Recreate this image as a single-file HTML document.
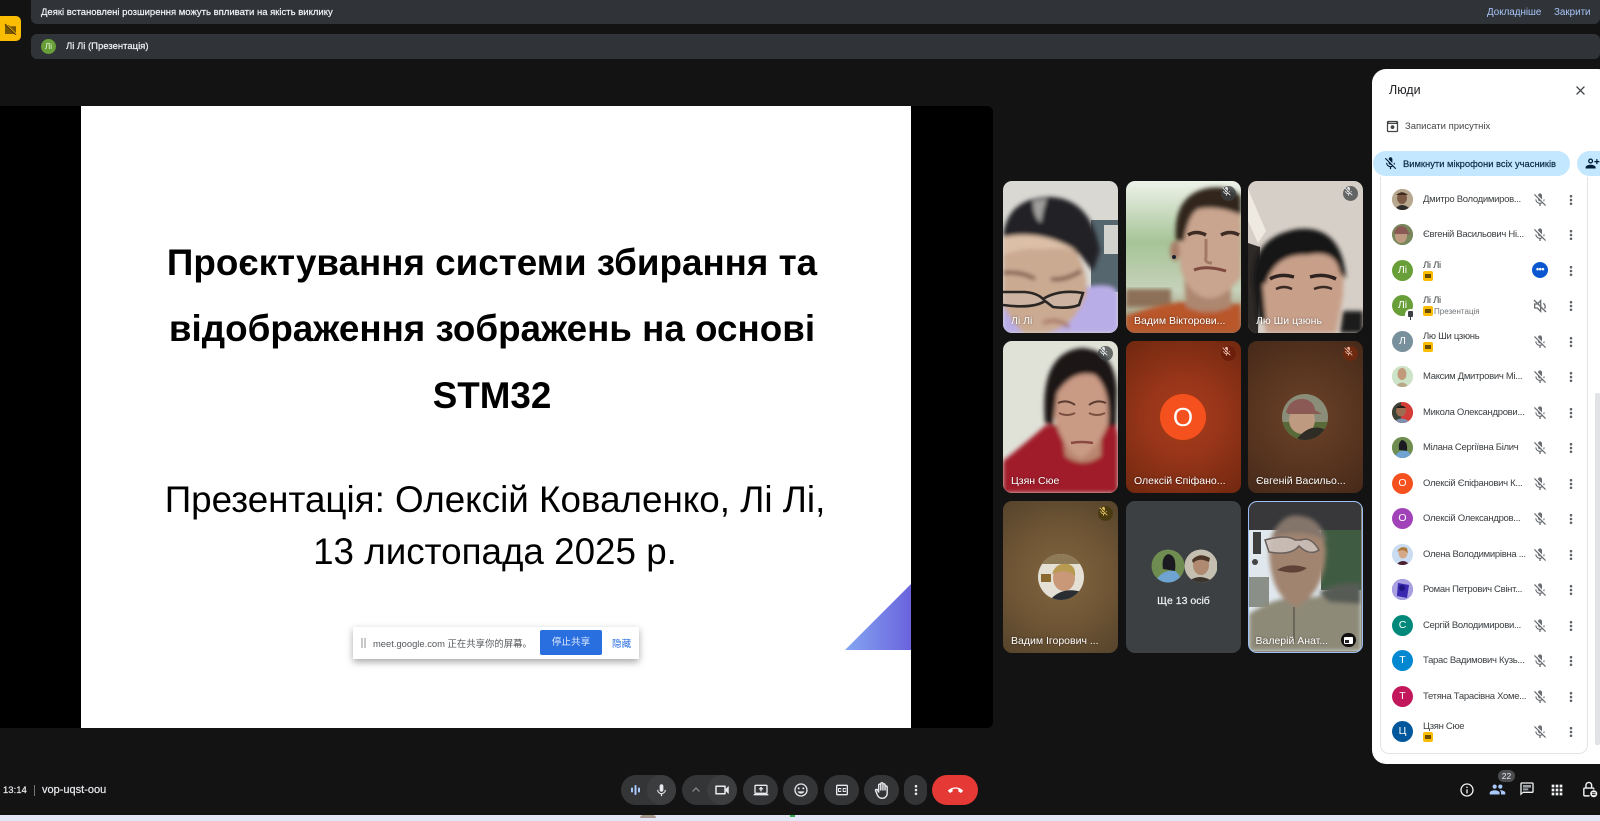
<!DOCTYPE html>
<html lang="uk">
<head>
<meta charset="utf-8">
<title>Google Meet</title>
<style>
*{box-sizing:border-box}
html,body{margin:0;padding:0;width:1600px;height:821px;overflow:hidden;background:#131314;font-family:"Liberation Sans","Noto Sans CJK SC",sans-serif}
body{filter:blur(.3px)}
.a{position:absolute}
.t{position:absolute;white-space:nowrap;line-height:1}
.md{-webkit-text-stroke:.2px currentColor}
.tile{position:absolute;width:115px;height:152px;border-radius:9px;overflow:hidden}
.tile svg{position:absolute;left:0;top:0}
.name{position:absolute;left:8px;bottom:6px;color:#fff;font-size:10.5px;white-space:nowrap;line-height:12px;text-shadow:0 0 2px rgba(0,0,0,.5)}
.chip{position:absolute;width:15px;height:15px;border-radius:50%;display:flex;align-items:center;justify-content:center}
.btn{position:absolute;top:775px;height:30px;border-radius:15px;background:#333537;display:flex;align-items:center;justify-content:center}
.row{position:absolute;left:0;width:228px;height:35px}
.av{position:absolute;left:20px;top:7px;width:21px;height:21px;border-radius:50%;color:#fff;font-size:10.5px;line-height:21px;text-align:center;overflow:hidden}
.n{position:absolute;left:51px;top:12px;font-size:9.5px;letter-spacing:-.3px;color:#3c4043;white-space:nowrap;line-height:11px}
.n2{top:7px}
.sub{position:absolute;left:51px;top:18px;width:10px;height:10px;border-radius:2px;background:#fbbc04}
.sub:after{content:"";position:absolute;left:2px;top:3px;width:6px;height:4px;background:#6b4e00}
.m{position:absolute;left:160px;top:9.5px}
.d{position:absolute;left:192px;top:10.5px}
</style>
</head>
<body>
<svg width="0" height="0" style="position:absolute">
<defs>
<symbol id="micoff" viewBox="0 0 24 24"><path d="M19 11h-1.7c0 .74-.16 1.43-.43 2.05l1.23 1.23c.56-.98.9-2.09.9-3.28zm-4.02.17c0-.06.02-.11.02-.17V5c0-1.66-1.34-3-3-3s-3 1.34-3 3v.18l5.98 5.99zM4.27 3L3 4.27l6.01 6.01V11c0 1.66 1.33 3 2.99 3 .22 0 .44-.03.65-.08l1.66 1.66c-.71.33-1.5.52-2.31.52-2.76 0-5.3-2.1-5.3-5.1H5c0 3.41 2.72 6.23 6 6.72V21h2v-3.28c.91-.13 1.77-.45 2.54-.9L19.73 21 21 19.73 4.27 3z"/></symbol>
<symbol id="dots" viewBox="0 0 24 24"><circle cx="12" cy="5.5" r="2.2"/><circle cx="12" cy="12" r="2.2"/><circle cx="12" cy="18.5" r="2.2"/></symbol>
</defs>
</svg>

<!-- top banners -->
<div class="a" style="left:31px;top:-6px;width:1569px;height:30px;background:#303338;border-radius:6px"></div>
<div class="t md" style="left:41px;top:7.5px;color:#f1f3f4;font-size:9.5px">Деякі встановлені розширення можуть впливати на якість виклику</div>
<div class="t" style="left:1487px;top:7.5px;color:#a8c7fa;font-size:9.8px">Докладніше</div>
<div class="t" style="left:1554px;top:7.5px;color:#a8c7fa;font-size:9.8px">Закрити</div>
<div class="a" style="left:31px;top:34px;width:1569px;height:25px;background:#303338;border-radius:6px"></div>
<div class="a" style="left:41px;top:39px;width:15px;height:15px;border-radius:50%;background:#689f38;color:#e8f5d8;font-size:8px;line-height:15px;text-align:center">Лі</div>
<div class="t md" style="left:66px;top:42px;color:#f1f3f4;font-size:9.5px">Лі Лі (Презентація)</div>

<!-- yellow tab -->
<div class="a" style="left:-6px;top:16px;width:27px;height:25px;border-radius:5px;background:#fbbc04"></div>
<svg class="a" style="left:4px;top:22px" width="13" height="13" viewBox="0 0 13 13"><path d="M1 3h4l1 1.2h6V12H1z" fill="#7a5a00"/><path d="M1 1l11 11" stroke="#fbbc04" stroke-width="1.2"/><path d="M1 2l11 11" stroke="#4a3600" stroke-width="1"/></svg>

<!-- presentation -->
<div class="a" style="left:0;top:106px;width:993px;height:622px;background:#000;border-radius:0 6px 6px 0"></div>
<div class="a" style="left:81px;top:106px;width:830px;height:622px;background:#fff"></div>
<div class="t" style="left:81px;width:822px;text-align:center;top:245.3px;font-size:36.8px;font-weight:700;color:#000">Проєктування системи збирання та</div>
<div class="t" style="left:81px;width:822px;text-align:center;top:311.3px;font-size:36.8px;font-weight:700;color:#000">відображення зображень на основі</div>
<div class="t" style="left:81px;width:822px;text-align:center;top:378.3px;font-size:36.8px;font-weight:700;color:#000">STM32</div>
<div class="t" style="left:80px;width:830px;text-align:center;top:481.6px;font-size:36.8px;color:#000">Презентація: Олексій Коваленко, Лі Лі,</div>
<div class="t" style="left:80px;width:830px;text-align:center;top:533.6px;font-size:36.8px;color:#000">13 листопада 2025 р.</div>
<svg class="a" style="left:845px;top:584px" width="66" height="66" viewBox="0 0 66 66"><defs><linearGradient id="tri" x1="0" x2="1" y1="0" y2="0"><stop offset="0" stop-color="#84a6f2"/><stop offset="1" stop-color="#6a63dd"/></linearGradient></defs><path d="M0 66L66 0V66z" fill="url(#tri)"/></svg>

<!-- share bar -->
<div class="a" style="left:353px;top:627px;width:286px;height:32px;background:#fff;box-shadow:0 3px 7px rgba(0,0,0,.35)"></div>
<div class="a" style="left:361px;top:638px;width:1.5px;height:10px;background:#c8c8c8"></div>
<div class="a" style="left:364px;top:638px;width:1.5px;height:10px;background:#c8c8c8"></div>
<div class="t" style="left:373px;top:639px;color:#55585c;font-size:9.4px">meet.google.com 正在共享你的屏幕。</div>
<div class="a" style="left:540px;top:630px;width:62px;height:25px;border-radius:2px;background:#2a6fe0;color:#dfeaff;font-size:9.6px;line-height:25px;text-align:center">停止共享</div>
<div class="t" style="left:612px;top:639.5px;color:#2a6fe0;font-size:9.6px">隐藏</div>

<!-- tile 1 -->
<div class="tile" style="left:1003px;top:181px">
<svg width="115" height="152" viewBox="0 0 115 152"><defs><filter id="b2"><feGaussianBlur stdDeviation="2"/></filter></defs>
<rect width="115" height="152" fill="#d9d8d3"/>
<rect x="88" y="39" width="27" height="72" fill="#56666f"/>
<rect x="101" y="44" width="14" height="29" fill="#d2d3cf"/>
<g filter="url(#b2)">
<path d="M83 106Q115 100 115 115V152H0V123Q60 125 83 106z" fill="#b9ade8"/>
<path d="M0 56Q4 16 48 16Q88 18 97 70L90 90L76 73Q40 50 0 58z" fill="#242426"/>
<path d="M0 56Q40 50 74 72Q84 90 84 112Q70 150 40 152H20Q8 140 0 124z" fill="#cbaa92"/>
<path d="M0 56Q40 48 74 70Q60 66 40 68Q20 66 0 74z" fill="#dcbfa7"/>
<path d="M30 20Q30 36 38 42Q40 28 44 18z" fill="#a09f9d"/>
<path d="M0 92Q18 90 32 98M48 98Q62 100 78 90" stroke="#6d4a3a" stroke-width="3.5" fill="none"/>
<path d="M40 142Q55 136 66 146" stroke="#a8786a" stroke-width="4" fill="none"/>
</g>
<path d="M0 111H22Q34 112 40 118Q56 108 80 112L76 124Q66 128 50 126L42 120Q30 128 0 124" fill="rgba(205,185,175,.55)" stroke="#2a2624" stroke-width="2.6"/>
</svg>
<div class="name">Лі Лі</div></div>

<!-- tile 2 -->
<div class="tile" style="left:1126px;top:181px">
<svg width="115" height="152" viewBox="0 0 115 152"><defs><linearGradient id="g2" x1="0" x2="0" y1="0" y2="1"><stop offset="0" stop-color="#eef2ea"/><stop offset=".4" stop-color="#a6c497"/><stop offset=".72" stop-color="#c6d2ba"/><stop offset="1" stop-color="#8f7a60"/></linearGradient></defs>
<rect width="115" height="152" fill="url(#g2)"/>
<rect x="0" y="108" width="45" height="18" fill="#8d7058" filter="url(#b2)"/>
<g filter="url(#b2)">
<path d="M0 135Q30 124 54 121L115 123V152H0z" fill="#b9562a"/>
<path d="M58 95H105V126Q82 136 60 126z" fill="#ad8770"/>
<ellipse cx="49" cy="70" rx="5" ry="10" fill="#a87e68"/>
<path d="M52 35Q64 24 115 26V96Q96 120 80 117Q60 112 54 85z" fill="#c9a48e"/>
<path d="M50 60Q46 14 82 7Q106 4 115 16V34Q92 24 72 28Q62 34 58 60z" fill="#33261f"/>
</g>
<path d="M62 54Q70 49 80 54M95 54Q104 49 113 54" stroke="#3e2c24" stroke-width="3.5" fill="none"/>
<path d="M80 58V76Q78 82 86 82" stroke="#a27a64" stroke-width="3" fill="none"/>
<path d="M68 89Q80 84 100 90" stroke="#7e4a40" stroke-width="3" fill="none"/>
<circle cx="48" cy="76" r="2" fill="#1a2430"/>
</svg>
<div class="name">Вадим Вікторови...</div>
<div class="chip" style="left:95px;top:5px;background:rgba(60,64,67,.75)"><svg width="11" height="11" fill="#e8eaed"><use href="#micoff"/></svg></div></div>

<!-- tile 3 -->
<div class="tile" style="left:1248px;top:181px">
<svg width="115" height="152" viewBox="0 0 115 152">
<rect width="115" height="152" fill="#d6cfc7"/>
<path d="M0 8L18 50L10 62L0 40z" fill="#eeeae2"/>
<path d="M0 62L12 66L10 152H0z" fill="#2e2a28"/>
<g filter="url(#b2)">
<path d="M95 130H115V152H92z" fill="#1e1e1e"/>
<path d="M12 90Q14 56 55 54Q90 54 96 85L95 115L88 152H18L12 115z" fill="#c8a08a"/>
<path d="M6 108Q0 56 50 48Q94 44 98 98L92 92Q88 68 60 74Q28 72 18 102z" fill="#171414"/>
<path d="M5 96H14L18 140L10 138z" fill="#171414"/>
</g>
<path d="M22 98Q32 92 46 96M62 96Q76 92 88 98" stroke="#2e2320" stroke-width="3.5" fill="none"/>
<path d="M28 108Q36 104 44 108M66 108Q76 104 84 108" stroke="#3a2a24" stroke-width="2.5" fill="none"/>
</svg>
<div class="name">Лю Ши цзюнь</div>
<div class="chip" style="left:95px;top:5px;background:rgba(60,64,67,.75)"><svg width="11" height="11" fill="#e8eaed"><use href="#micoff"/></svg></div></div>

<!-- tile 4 -->
<div class="tile" style="left:1003px;top:341px">
<svg width="115" height="152" viewBox="0 0 115 152">
<rect width="115" height="152" fill="#e0e2d8"/>
<g filter="url(#b2)">
<path d="M0 120Q25 100 43 84L113 84L115 95V152H0z" fill="#a01a2c"/>
<path d="M60 95H98V115Q80 128 62 115z" fill="#b98670"/>
<path d="M47 55Q50 24 78 25Q108 26 110 55Q108 98 78 118Q54 105 47 55z" fill="#c99a84"/>
<path d="M42 82Q36 12 78 7Q112 8 114 50L113 85L105 85Q108 48 92 34Q70 28 54 52L50 84z" fill="#1c1616"/>
</g>
<path d="M55 62Q64 58 72 64M86 64Q94 58 103 62" stroke="#5a3a30" stroke-width="2" fill="none"/>
<path d="M56 72Q64 76 72 72M86 72Q94 76 102 72" stroke="#7a5040" stroke-width="2" fill="none"/>
<path d="M68 102Q78 100 90 102" stroke="#8a4a44" stroke-width="2.5" fill="none"/>
</svg>
<div class="name">Цзян Сюе</div>
<div class="chip" style="left:95px;top:5px;background:rgba(60,64,67,.75)"><svg width="11" height="11" fill="#e8eaed"><use href="#micoff"/></svg></div></div>

<!-- tile 5 -->
<div class="tile" style="left:1126px;top:341px;background:radial-gradient(circle at 50% 50%,#a83c18 0,#98351a 40%,#70280f 100%)">
<div class="a" style="left:34px;top:53px;width:46px;height:46px;border-radius:50%;background:#f4511e;color:#fff;font-size:26px;line-height:46px;text-align:center">О</div>
<div class="name">Олексій Єпіфано...</div>
<div class="chip" style="left:95px;top:5px;background:#6e1f0c"><svg width="11" height="11" fill="#f2c5b5"><use href="#micoff"/></svg></div></div>

<!-- tile 6 -->
<div class="tile" style="left:1248px;top:341px;background:radial-gradient(circle at 50% 50%,#6b4228 0,#5a3620 50%,#46291a 100%)">
<svg class="a" style="left:34px;top:53px" width="46" height="46" viewBox="0 0 46 46"><defs><clipPath id="c46"><circle cx="23" cy="23" r="23"/></clipPath></defs><g clip-path="url(#c46)"><rect width="46" height="46" fill="#8a8d78"/><rect y="28" width="46" height="18" fill="#586a38"/><ellipse cx="20" cy="26" rx="13" ry="14" fill="#bd9a80"/><path d="M4 18Q8 4 22 5Q32 7 33 16L40 20H6z" fill="#8c5a54"/><path d="M14 46Q28 28 44 36V46z" fill="#2f2c26"/></g></svg>
<div class="name">Євгеній Васильо...</div>
<div class="chip" style="left:95px;top:5px;background:#6e2a10"><svg width="11" height="11" fill="#e9b9a5"><use href="#micoff"/></svg></div></div>

<!-- tile 7 -->
<div class="tile" style="left:1003px;top:501px;background:radial-gradient(circle at 50% 50%,#806540 0,#705635 50%,#55432b 100%)">
<svg class="a" style="left:35px;top:53px" width="46" height="46" viewBox="0 0 46 46"><g clip-path="url(#c46)"><rect width="46" height="46" fill="#e4e0d6"/><rect y="0" width="46" height="10" fill="#8f7a58"/><rect x="3" y="20" width="10" height="8" fill="#8a6a30"/><ellipse cx="26" cy="24" rx="11" ry="13" fill="#c89878"/><path d="M14 20Q18 8 30 10Q38 12 37 22Q28 14 14 20z" fill="#b89a50"/><path d="M12 46Q24 32 44 38V46z" fill="#2a2e32"/></g></svg>
<div class="name">Вадим Ігорович ...</div>
<div class="chip" style="left:95px;top:5px;background:#4a3a12"><svg width="11" height="11" fill="#e8c560"><use href="#micoff"/></svg></div></div>

<!-- tile 8 -->
<div class="tile" style="left:1126px;top:501px;background:#3c4043">
<svg class="a" style="left:25px;top:48px" width="66" height="34" viewBox="0 0 66 34"><defs><clipPath id="c1"><circle cx="17" cy="17" r="16.5"/></clipPath><clipPath id="c2"><circle cx="50" cy="17" r="16.5"/></clipPath></defs>
<g clip-path="url(#c1)"><rect width="34" height="34" fill="#6f8d50"/><path d="M17 5Q26 6 24 22L12 20Q10 8 17 5z" fill="#1a1a20"/><path d="M4 34Q10 20 24 22Q30 26 30 34z" fill="#6fa4d2"/></g>
<g clip-path="url(#c2)"><rect x="33" width="34" height="34" fill="#c5bfb2"/><ellipse cx="50" cy="16" rx="8" ry="10" fill="#b08a70"/><path d="M41 11Q48 3 59 9L58 13Q48 8 42 14z" fill="#4a3526"/><path d="M36 34Q48 22 64 34z" fill="#3a342c"/></g></svg>
<div class="t md" style="left:0;width:115px;text-align:center;top:95px;color:#f1f3f4;font-size:10.5px">Ще 13 осіб</div></div>

<!-- tile 9 -->
<div class="tile" style="left:1248px;top:501px;border:1.5px solid #9cc0f5;background:#8d8977">
<svg width="112" height="149" viewBox="0 0 112 149">
<rect width="112" height="149" fill="#e0e8ee"/>
<rect width="112" height="28" fill="#38383a"/>
<rect x="72" y="28" width="40" height="60" fill="#3f5c42"/>
<rect x="0" y="75" width="20" height="30" fill="#8a9088"/>
<rect x="4" y="30" width="8" height="22" fill="#3e3e3e"/>
<circle cx="6" cy="60" r="3" fill="#444"/>
<g filter="url(#b2)">
<path d="M0 112Q30 92 50 98L80 92Q100 84 112 92V149H0z" fill="#8e8a78"/>
<path d="M70 90Q90 78 112 82V102L80 100z" fill="#565b54"/>
<path d="M20 50Q22 16 48 16Q72 16 77 48Q76 90 48 105Q22 96 20 50z" fill="#a08470"/>
<path d="M24 32Q34 10 52 14Q72 16 78 40Q60 26 24 34z" fill="#83746a"/>
</g>
<path d="M16 38Q38 32 46 38L52 38Q62 34 70 48L66 50Q58 52 50 44Q42 54 20 50z" fill="rgba(205,195,190,.85)" stroke="#6a5f5a" stroke-width="1.5"/>
<path d="M28 68Q40 60 58 66Q48 74 28 68z" fill="#5e4238"/>
<path d="M45 105V140" stroke="#6a6658" stroke-width="2"/>
</svg>
<div class="name" style="left:6.5px;bottom:5px">Валерій Анат...</div>
<div class="a" style="left:92px;top:131px;width:15px;height:14px;border-radius:7px;background:#111"></div>
<div class="a" style="left:95px;top:135px;width:9px;height:7px;border-radius:1px;background:#fff"></div>
<div class="a" style="left:96px;top:138px;width:4px;height:3px;background:#222"></div>
</div>

<!-- panel -->
<div class="a" style="left:1372px;top:69px;width:240px;height:695px;background:#fff;border-radius:14px 14px 10px 14px;overflow:hidden">
  <div class="t" style="left:17px;top:15px;font-size:12.5px;color:#202124">Люди</div>
  <svg class="a" style="left:200.5px;top:13.5px" width="15" height="15" viewBox="0 0 24 24" fill="#3c4043"><path d="M19 6.41L17.59 5 12 10.59 6.41 5 5 6.41 10.59 12 5 17.59 6.41 19 12 13.41 17.59 19 19 17.59 13.41 12z"/></svg>
  <svg class="a" style="left:12.5px;top:49.5px" width="15" height="15" viewBox="0 0 24 24" fill="#444746"><path d="M19 3H5c-1.1 0-2 .9-2 2v14c0 1.1.9 2 2 2h14c1.1 0 2-.9 2-2V5c0-1.1-.9-2-2-2zm0 16H5V8h14v11zM6 5h12v1H6z"/><circle cx="12" cy="13" r="3"/></svg>
  <div class="t" style="left:33px;top:53px;font-size:9.5px;color:#444746">Записати присутніх</div>
  <div class="a" style="left:1px;top:82px;width:197px;height:25px;border-radius:13px;background:#c2e7ff"></div>
  <svg class="a" style="left:11px;top:87px" width="15" height="15" fill="#001d35"><use href="#micoff"/></svg>
  <div class="t md" style="left:31px;top:90px;font-size:9.4px;color:#0b2a44">Вимкнути мікрофони всіх учасників</div>
  <div class="a" style="left:205px;top:82px;width:40px;height:25px;border-radius:13px;background:#c2e7ff"></div>
  <svg class="a" style="left:213px;top:87px" width="15" height="15" viewBox="0 0 24 24" fill="#001d35"><path d="M15 12c2.21 0 4-1.79 4-4s-1.79-4-4-4-4 1.79-4 4 1.79 4 4 4zm0-6c1.1 0 2 .9 2 2s-.9 2-2 2-2-.9-2-2 .9-2 2-2zm-9 2V5H4v3H1v2h3v3h2v-3h3V8H6zm9 6c-2.67 0-8 1.34-8 4v2h16v-2c0-2.66-5.33-4-8-4z" transform="matrix(-1 0 0 1 24 0)"/></svg>

  <div class="a" style="left:8px;top:108px;width:208px;height:577px;border:1px solid #e3e4e6;border-top:0;border-radius:0 0 9px 9px;background:#fff"></div>
  <div class="a" style="left:223px;top:324px;width:5px;height:352px;background:#e2e3e6;border-radius:2px"></div>

  <div class="a" style="left:0;top:0;width:228px;height:695px">
  <div class="row" style="top:113px"><div class="av" style="background:#a08a70"><svg width="21" height="21"><rect width="21" height="21" fill="#b8a890"/><ellipse cx="10" cy="9" rx="5" ry="6" fill="#7d5a44"/><path d="M2 21Q10 11 19 21z" fill="#2e2b28"/><path d="M4 6Q10 1 16 6z" fill="#3e2e22"/></svg></div><div class="n">Дмитро Володимиров...</div><svg class="m" width="16" height="16" fill="#6a6e72"><use href="#micoff"/></svg><svg class="d" width="14" height="14" fill="#5f6368"><use href="#dots"/></svg></div>
  <div class="row" style="top:148px"><div class="av" style="background:#8a8d78"><svg width="21" height="21"><rect width="21" height="21" fill="#78885c"/><ellipse cx="9" cy="12" rx="6" ry="7" fill="#bd9a80"/><path d="M2 9Q4 2 10 2Q15 3 16 8L19 10H3z" fill="#8c5a54"/></svg></div><div class="n">Євгеній Васильович Ні...</div><svg class="m" width="16" height="16" fill="#6a6e72"><use href="#micoff"/></svg><svg class="d" width="14" height="14" fill="#5f6368"><use href="#dots"/></svg></div>
  <div class="row" style="top:184px"><div class="av" style="background:#689f38">Лі</div><div class="n n2">Лі Лі</div><div class="sub"></div><div class="a" style="left:160px;top:9px;width:16px;height:16px;border-radius:50%;background:#0b57d0;color:#fff;font-size:9px;line-height:15px;text-align:center;font-weight:700;letter-spacing:-.5px">•••</div><svg class="d" width="14" height="14" fill="#5f6368"><use href="#dots"/></svg></div>
  <div class="row" style="top:219px"><div class="av" style="background:#689f38">Лі</div><div class="a" style="left:33px;top:21px;width:11px;height:12px;border-radius:50%;background:#fff"></div><div class="a" style="left:36px;top:23px;width:5px;height:6px;background:#3c4043;border-radius:1px"></div><div class="a" style="left:38px;top:28px;width:1.2px;height:4px;background:#3c4043"></div><div class="n n2">Лі Лі</div><div class="sub"></div><div class="t" style="left:62px;top:20px;font-size:8px;color:#70757a">Презентація</div><svg class="m" width="16" height="16" viewBox="0 0 24 24" fill="none" stroke="#6a6e72" stroke-width="2"><path d="M4 9v6h4l5 5V4L8 9H4zM17 8a6 6 0 0 1 2 8M3 3l18 18"/></svg><svg class="d" width="14" height="14" fill="#5f6368"><use href="#dots"/></svg></div>
  <div class="row" style="top:255px"><div class="av" style="background:#78909c">Л</div><div class="n n2">Лю Ши цзюнь</div><div class="sub"></div><svg class="m" width="16" height="16" fill="#6a6e72"><use href="#micoff"/></svg><svg class="d" width="14" height="14" fill="#5f6368"><use href="#dots"/></svg></div>
  <div class="row" style="top:290px"><div class="av" style="background:#c5e0c0"><svg width="21" height="21"><rect width="21" height="21" fill="#cde3c8"/><ellipse cx="10" cy="8" rx="4.5" ry="6" fill="#c09a7a"/><path d="M3 21Q10 12 17 21z" fill="#b8a888"/></svg></div><div class="n">Максим Дмитрович Мі...</div><svg class="m" width="16" height="16" fill="#6a6e72"><use href="#micoff"/></svg><svg class="d" width="14" height="14" fill="#5f6368"><use href="#dots"/></svg></div>
  <div class="row" style="top:326px"><div class="av" style="background:#d33"><svg width="21" height="21"><rect width="21" height="21" fill="#d43c38"/><rect width="9" height="21" fill="#3a4438"/><ellipse cx="9" cy="9" rx="5" ry="5.5" fill="#9e6c50"/><path d="M4 6Q9 1 14 6z" fill="#241c18"/><path d="M1 21Q9 12 19 21z" fill="#7f90ad"/></svg></div><div class="n">Микола Олександрови...</div><svg class="m" width="16" height="16" fill="#6a6e72"><use href="#micoff"/></svg><svg class="d" width="14" height="14" fill="#5f6368"><use href="#dots"/></svg></div>
  <div class="row" style="top:361px"><div class="av" style="background:#6f8d50"><svg width="21" height="21"><rect width="21" height="21" fill="#6f8d50"/><path d="M10 3Q16 4 15 14L7 13Q6 5 10 3z" fill="#1a1a20"/><path d="M2 21Q6 12 15 14Q19 16 19 21z" fill="#6fa4d2"/></svg></div><div class="n">Мілана Сергіївна Білич</div><svg class="m" width="16" height="16" fill="#6a6e72"><use href="#micoff"/></svg><svg class="d" width="14" height="14" fill="#5f6368"><use href="#dots"/></svg></div>
  <div class="row" style="top:397px"><div class="av" style="background:#f4511e">О</div><div class="n">Олексій Єпіфанович К...</div><svg class="m" width="16" height="16" fill="#6a6e72"><use href="#micoff"/></svg><svg class="d" width="14" height="14" fill="#5f6368"><use href="#dots"/></svg></div>
  <div class="row" style="top:432px"><div class="av" style="background:#a142b8">О</div><div class="n">Олексій Олександров...</div><svg class="m" width="16" height="16" fill="#6a6e72"><use href="#micoff"/></svg><svg class="d" width="14" height="14" fill="#5f6368"><use href="#dots"/></svg></div>
  <div class="row" style="top:468px"><div class="av" style="background:#c9dcf2"><svg width="21" height="21"><rect width="21" height="21" fill="#c9dcf2"/><ellipse cx="11" cy="9" rx="4.5" ry="5.5" fill="#d4a888"/><path d="M5 8Q8 1 15 4L16 9Q11 4 5 8z" fill="#b07a3c"/><path d="M4 21Q11 13 18 21z" fill="#4a2030"/></svg></div><div class="n">Олена Володимирівна ...</div><svg class="m" width="16" height="16" fill="#6a6e72"><use href="#micoff"/></svg><svg class="d" width="14" height="14" fill="#5f6368"><use href="#dots"/></svg></div>
  <div class="row" style="top:503px"><div class="av" style="background:#5a48c0"><svg width="21" height="21"><rect width="21" height="21" fill="#a8a0e0"/><path d="M6 4L17 6L15 19L5 17z" fill="#3a28b0"/><circle cx="10" cy="9" r="3" fill="#1e1480"/></svg></div><div class="n">Роман Петрович Свінт...</div><svg class="m" width="16" height="16" fill="#6a6e72"><use href="#micoff"/></svg><svg class="d" width="14" height="14" fill="#5f6368"><use href="#dots"/></svg></div>
  <div class="row" style="top:539px"><div class="av" style="background:#00897b">С</div><div class="n">Сергій Володимирови...</div><svg class="m" width="16" height="16" fill="#6a6e72"><use href="#micoff"/></svg><svg class="d" width="14" height="14" fill="#5f6368"><use href="#dots"/></svg></div>
  <div class="row" style="top:574px"><div class="av" style="background:#0288d1">Т</div><div class="n">Тарас Вадимович Кузь...</div><svg class="m" width="16" height="16" fill="#6a6e72"><use href="#micoff"/></svg><svg class="d" width="14" height="14" fill="#5f6368"><use href="#dots"/></svg></div>
  <div class="row" style="top:610px"><div class="av" style="background:#c2185b">Т</div><div class="n">Тетяна Тарасівна Хоме...</div><svg class="m" width="16" height="16" fill="#6a6e72"><use href="#micoff"/></svg><svg class="d" width="14" height="14" fill="#5f6368"><use href="#dots"/></svg></div>
  <div class="row" style="top:645px"><div class="av" style="background:#01579b">Ц</div><div class="n n2">Цзян Сюе</div><div class="sub"></div><svg class="m" width="16" height="16" fill="#6a6e72"><use href="#micoff"/></svg><svg class="d" width="14" height="14" fill="#5f6368"><use href="#dots"/></svg></div>
  </div>
</div>

<!-- bottom left -->
<div class="t md" style="left:3px;top:785.5px;color:#e8eaed;font-size:9.5px">13:14</div>
<div class="a" style="left:34px;top:785px;width:1px;height:11px;background:#70757a"></div>
<div class="t md" style="left:42px;top:785px;color:#e8eaed;font-size:11px">vop-uqst-oou</div>

<!-- toolbar -->
<div class="btn" style="left:621px;width:55px"></div>
<div class="btn" style="left:647px;width:29px;background:#3c3d3f"><svg width="15" height="15" viewBox="0 0 24 24" fill="#e8eaed"><path d="M12 14c1.66 0 3-1.34 3-3V5c0-1.66-1.34-3-3-3S9 3.34 9 5v6c0 1.66 1.34 3 3 3zm5.3-3c0 3-2.54 5.1-5.3 5.1S6.7 14 6.7 11H5c0 3.41 2.72 6.23 6 6.72V21h2v-3.28c3.28-.48 6-3.3 6-6.72h-1.7z"/></svg></div>
<svg class="a" style="left:630px;top:784px" width="11" height="12"><rect x="1" y="3.5" width="2" height="5" rx="1" fill="#a8c7fa"/><rect x="4.5" y="1" width="2" height="10" rx="1" fill="#a8c7fa"/><rect x="8" y="3.5" width="2" height="5" rx="1" fill="#a8c7fa"/></svg>
<div class="btn" style="left:682px;width:55px"></div>
<div class="btn" style="left:707px;width:30px;background:#3c3d3f"><svg width="18" height="18" viewBox="0 0 24 24" fill="#e8eaed"><path d="M15 8v8H5V8h10m1-2H4c-.55 0-1 .45-1 1v10c0 .55.45 1 1 1h12c.55 0 1-.45 1-1v-3.5l4 4v-11l-4 4V7c0-.55-.45-1-1-1z"/></svg></div>
<svg class="a" style="left:691px;top:786px" width="10" height="7" fill="none" stroke="#80868b" stroke-width="1.3"><path d="M1.5 5.5L5 2l3.5 3.5"/></svg>
<div class="btn" style="left:743px;width:35px"><svg width="16" height="16" viewBox="0 0 24 24" fill="#e8eaed"><path d="M20 18c1.1 0 2-.9 2-2V6c0-1.1-.9-2-2-2H4c-1.1 0-2 .9-2 2v10c0 1.1.9 2 2 2H1v2h22v-2h-3zM4 6h16v10H4V6zm8 1l-4 4h3v3h2v-3h3l-4-4z"/></svg></div>
<div class="btn" style="left:783px;width:35px"><svg width="16" height="16" viewBox="0 0 24 24" fill="#e8eaed"><path d="M11.99 2C6.47 2 2 6.48 2 12s4.47 10 9.99 10C17.52 22 22 17.52 22 12S17.52 2 11.99 2zM12 20c-4.42 0-8-3.58-8-8s3.58-8 8-8 8 3.58 8 8-3.58 8-8 8zm3.5-9c.83 0 1.5-.67 1.5-1.5S16.33 8 15.5 8 14 8.67 14 9.5s.67 1.5 1.5 1.5zm-7 0c.83 0 1.5-.67 1.5-1.5S9.33 8 8.5 8 7 8.67 7 9.5 7.67 11 8.5 11zm3.5 6.5c2.33 0 4.31-1.46 5.11-3.5H6.89c.8 2.04 2.78 3.5 5.11 3.5z"/></svg></div>
<div class="btn" style="left:824px;width:35px"><svg width="16" height="16" viewBox="0 0 24 24" fill="#e8eaed"><path d="M19 4H5c-1.11 0-2 .9-2 2v12c0 1.1.89 2 2 2h14c1.1 0 2-.9 2-2V6c0-1.1-.9-2-2-2zm0 14H5V6h14v12zM7 15h3c.55 0 1-.45 1-1v-1H9.5v.5h-2v-3h2v.5H11v-1c0-.55-.45-1-1-1H7c-.55 0-1 .45-1 1v4c0 .55.45 1 1 1zm7 0h3c.55 0 1-.45 1-1v-1h-1.5v.5h-2v-3h2v.5H18v-1c0-.55-.45-1-1-1h-3c-.55 0-1 .45-1 1v4c0 .55.45 1 1 1z"/></svg></div>
<div class="btn" style="left:864px;width:35px"><svg width="17" height="17" viewBox="0 0 24 24" fill="#e8eaed"><path d="M21 7c0-1.38-1.12-2.5-2.5-2.5-.17 0-.34.02-.5.05V4c0-1.38-1.12-2.5-2.5-2.5-.23 0-.46.03-.67.09C14.46.66 13.56 0 12.5 0c-1.23 0-2.25.89-2.46 2.06C9.87 2.02 9.69 2 9.5 2 8.12 2 7 3.12 7 4.5v5.89c-.34-.31-.76-.54-1.22-.66L5 9.52c-.83-.23-1.7.09-2.19.83-.38.57-.4 1.31-.15 1.95l2.56 6.43C6.49 21.91 9.57 24 13 24c4.42 0 8-3.58 8-8V7zm-2 9c0 3.31-2.69 6-6 6-2.61 0-4.95-1.59-5.91-4.01l-2.6-6.54.53.14c.46.12.83.46 1 .9L7 15h2V4.5c0-.28.22-.5.5-.5s.5.22.5.5V12h2V2.5c0-.28.22-.5.5-.5s.5.22.5.5V12h2V4c0-.28.22-.5.5-.5s.5.22.5.5v8h2V7c0-.28.22-.5.5-.5s.5.22.5.5v9z"/></svg></div>
<div class="btn" style="left:904px;width:23px"><svg width="14" height="14" fill="#e8eaed"><use href="#dots"/></svg></div>
<div class="btn" style="left:932px;width:46px;background:#e53935"><svg width="15" height="15" viewBox="0 0 24 24" fill="#fff"><path d="M12 9c-1.6 0-3.15.25-4.6.72v3.1c0 .39-.23.74-.56.9-.98.49-1.87 1.12-2.66 1.85-.18.18-.43.28-.7.28-.28 0-.53-.11-.71-.29L.29 13.08c-.18-.17-.29-.42-.29-.7 0-.28.11-.53.29-.71C3.34 8.78 7.46 7 12 7s8.66 1.78 11.71 4.67c.18.18.29.43.29.71 0 .28-.11.53-.29.71l-2.48 2.48c-.18.18-.43.29-.71.29-.27 0-.52-.11-.7-.28-.79-.74-1.69-1.36-2.67-1.85-.33-.16-.56-.5-.56-.9v-3.1C15.15 9.25 13.6 9 12 9z"/></svg></div>

<!-- right icons -->
<svg class="a" style="left:1459px;top:782px" width="16" height="16" viewBox="0 0 24 24" fill="#f1f3f4"><path d="M11 7h2v2h-2zm0 4h2v6h-2zm1-9C6.48 2 2 6.48 2 12s4.48 10 10 10 10-4.48 10-10S17.52 2 12 2zm0 18c-4.41 0-8-3.59-8-8s3.59-8 8-8 8 3.59 8 8-3.59 8-8 8z"/></svg>
<svg class="a" style="left:1488.5px;top:781px" width="17" height="17" viewBox="0 0 24 24" fill="#a8c7fa"><path d="M16 11c1.66 0 2.99-1.34 2.99-3S17.66 5 16 5c-1.66 0-3 1.34-3 3s1.34 3 3 3zm-8 0c1.66 0 2.99-1.34 2.99-3S9.66 5 8 5C6.34 5 5 6.34 5 8s1.34 3 3 3zm0 2c-2.33 0-7 1.17-7 3.5V19h14v-2.5c0-2.33-4.67-3.5-7-3.5zm8 0c-.29 0-.62.02-.97.05 1.16.84 1.97 1.97 1.97 3.45V19h6v-2.5c0-2.33-4.67-3.5-7-3.5z"/></svg>
<div class="a" style="left:1498px;top:770px;width:17px;height:12px;border-radius:6px;background:#4a4c4f;color:#e8eaed;font-size:8.5px;line-height:12px;text-align:center">22</div>
<svg class="a" style="left:1519px;top:781px" width="16" height="16" viewBox="0 0 24 24" fill="#f1f3f4"><path d="M20 2H4c-1.1 0-2 .9-2 2v18l4-4h14c1.1 0 2-.9 2-2V4c0-1.1-.9-2-2-2zm0 14H6l-2 2V4h16v12z"/><path d="M6 6h12v4H6zM6 11h8v3H6z" fill="#9aa0a6"/></svg>
<svg class="a" style="left:1549px;top:782px" width="16" height="16" viewBox="0 0 24 24" fill="#f1f3f4"><path d="M4 4h4v4H4zM10 4h4v4h-4zM16 4h4v4h-4zM4 10h4v4H4zM10 10h4v4h-4zM16 10h4v4h-4zM4 16h4v4H4zM10 16h4v4h-4zM16 16h4v4h-4z"/></svg>
<svg class="a" style="left:1581px;top:781px" width="17" height="17" viewBox="0 0 24 24" fill="#f1f3f4"><path d="M17 9h-1V6c0-2.76-2.24-5-5-5S6 3.24 6 6v3H5c-1.1 0-2 .9-2 2v9c0 1.1.9 2 2 2h7v-2H5v-9h12v1h2v-1c0-1.1-.9-2-2-2zM8 6c0-1.66 1.34-3 3-3s3 1.34 3 3v3H8V6z"/><circle cx="18" cy="18" r="5"/><rect x="15.5" y="16" width="5" height="1.4" fill="#131314"/><rect x="15.5" y="18.5" width="5" height="1.4" fill="#131314"/></svg>

<!-- bottom strip -->
<div class="a" style="left:0;top:815px;width:1600px;height:6px;background:#e2e6f6"></div>
<div class="a" style="left:640px;top:815px;width:16px;height:3px;border-radius:8px 8px 0 0;background:#a89a8e"></div>
<div class="a" style="left:790px;top:815px;width:5px;height:2px;background:#34a853"></div>
</body>
</html>
